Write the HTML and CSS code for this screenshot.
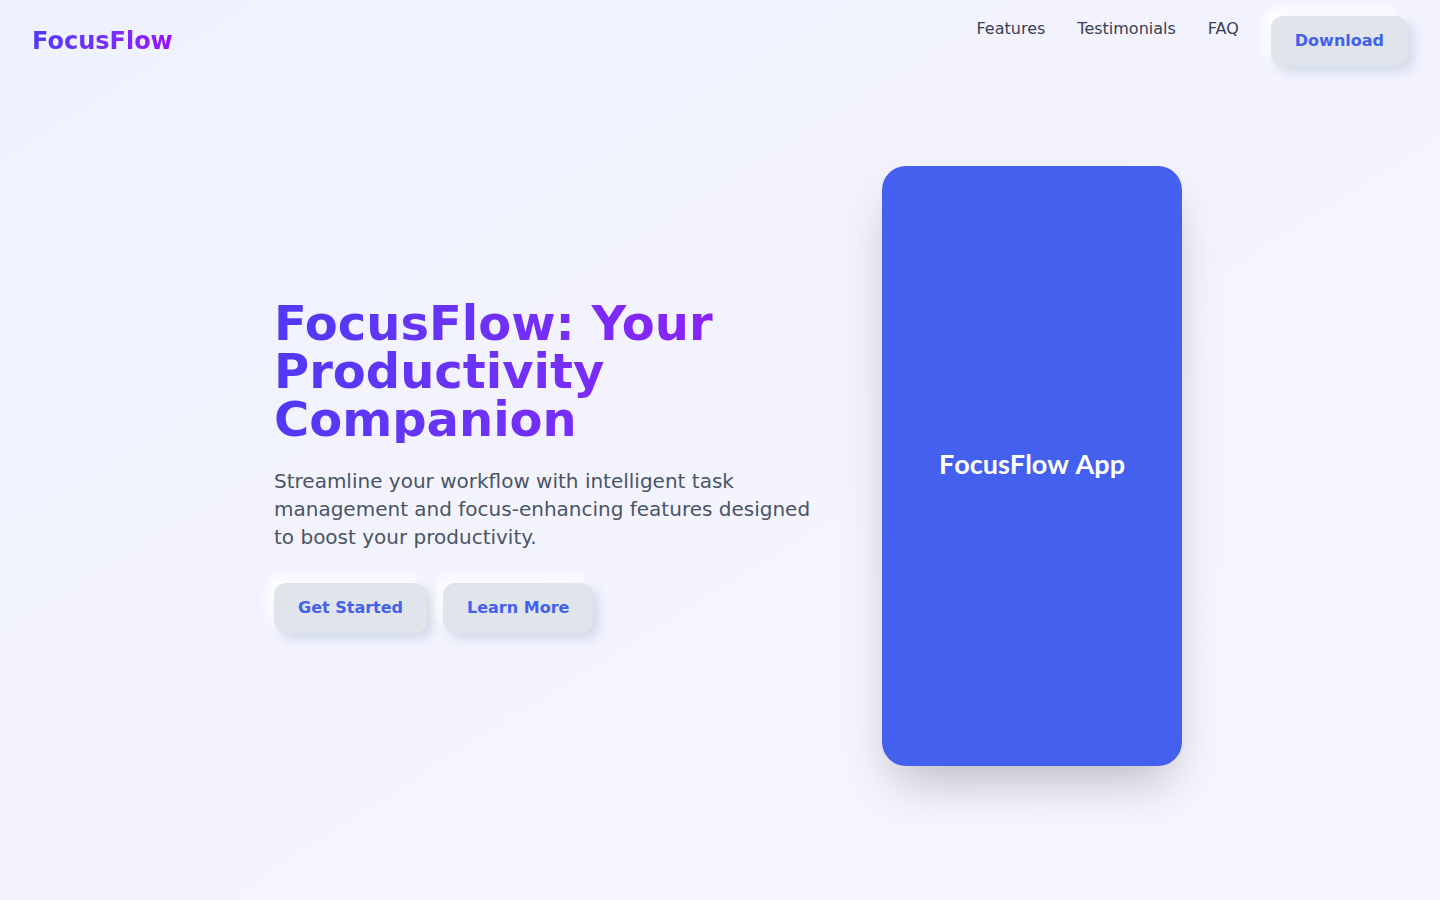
FILE: index.html
```html
<!DOCTYPE html>
<html lang="en">
<head>
<meta charset="utf-8">
<meta name="viewport" content="width=device-width, initial-scale=1">
<title>FocusFlow</title>
<link rel="stylesheet" href="styles.css">
</head>
<body>
<header class="site-header">
  <div class="brand gradient-text">FocusFlow</div>
  <nav class="site-nav" aria-label="Main">
    <a href="#features">Features</a>
    <a href="#testimonials">Testimonials</a>
    <a href="#faq">FAQ</a>
    <button class="soft-button" type="button">Download</button>
  </nav>
</header>
<main class="hero">
  <section class="hero-copy">
    <h1 class="hero-title gradient-text">FocusFlow: Your Productivity Companion</h1>
    <p class="hero-lead">Streamline your workflow with intelligent task management and focus-enhancing features designed to boost your productivity.</p>
    <div class="hero-actions">
      <button class="soft-button" type="button">Get Started</button>
      <button class="soft-button" type="button">Learn More</button>
    </div>
  </section>
  <div class="hero-visual">
    <div class="phone">FocusFlow App</div>
  </div>
</main>
</body>
</html>
```

FILE: styles.css
```css
* {
  box-sizing: border-box;
  margin: 0;
  padding: 0;
}

body {
  min-height: 100vh;
  display: flex;
  flex-direction: column;
  background: linear-gradient(to bottom right in oklab, #eef2ff, #f9f5ff);
  color: #364153;
  font-family: "DejaVu Sans", sans-serif;
  font-size: 16px;
  line-height: 26px;
}

.gradient-text {
  background: linear-gradient(to right in oklab, #4f39f6, #9810fa);
  background-clip: text;
  -webkit-background-clip: text;
  color: transparent;
}

.site-header {
  display: flex;
  justify-content: space-between;
  align-items: center;
  padding: 16px 32px;
}

.brand {
  font-size: 24px;
  line-height: 32px;
  font-weight: 700;
}

.site-nav {
  display: flex;
  align-items: flex-start;
  gap: 32px;
}

.site-nav a {
  color: #364153;
  text-decoration: none;
}

.soft-button {
  border: 0;
  border-radius: 12px;
  padding: 12px 24px;
  background: #e0e5ec;
  color: #4361ee;
  font: inherit;
  font-weight: 600;
  box-shadow: 6px 6px 12px #d1d9e6, -6px -6px 12px #ffffff;
  cursor: pointer;
}

.hero {
  flex: 1;
  display: flex;
  align-items: center;
  justify-content: center;
  gap: 48px;
  padding: 0 32px 50px 48px;
}

.hero-copy {
  width: 560px;
}

.hero-title {
  margin-bottom: 24px;
  font-size: 48px;
  line-height: 48px;
  font-weight: 700;
}

.hero-lead {
  margin-bottom: 32px;
  color: #4a5565;
  font-size: 20px;
  line-height: 28px;
}

.hero-actions {
  display: flex;
  gap: 16px;
}

.phone {
  display: flex;
  align-items: center;
  justify-content: center;
  width: 300px;
  aspect-ratio: 1 / 2;
  padding-bottom: 4px;
  border-radius: 24px;
  background: #4361ee;
  color: #ffffff;
  font-family: Lato, sans-serif;
  font-size: 27px;
  font-weight: 700;
  font-kerning: none;
  box-shadow: 0 25px 50px -12px rgba(0, 0, 0, 0.25);
}
```
